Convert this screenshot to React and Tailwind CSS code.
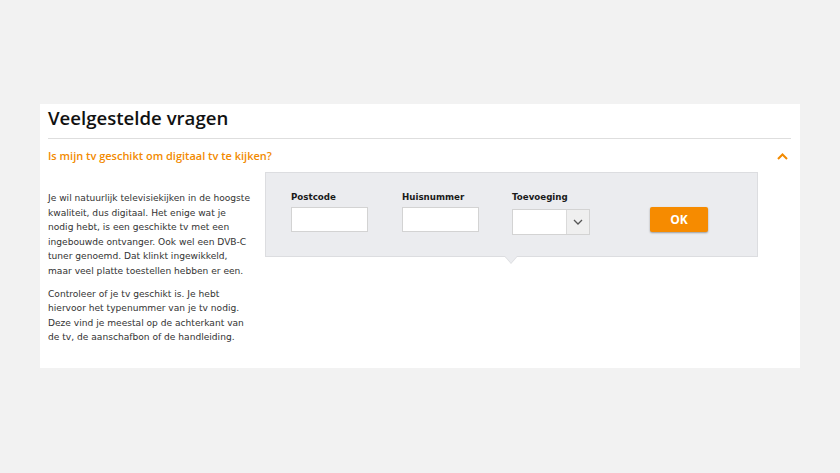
import React from 'react';

// FAQ block with postcode check form
// lines are broken by hand so the wrap matches the original
const paragraphs = [
    [
        'Je wil natuurlijk televisiekijken in de hoogste',
        'kwaliteit, dus digitaal. Het enige wat je',
        'nodig hebt, is een geschikte tv met een',
        'ingebouwde ontvanger. Ook wel een DVB-C',
        'tuner genoemd. Dat klinkt ingewikkeld,',
        'maar veel platte toestellen hebben er een.',
    ],
    [
        'Controleer of je tv geschikt is. Je hebt',
        'hiervoor het typenummer van je tv nodig.',
        'Deze vind je meestal op de achterkant van',
        'de tv, de aanschafbon of de handleiding.',
    ],
];

function Field({ label, children }) {
    return (
        <div className="flex flex-col">
            <label className="text-[8.7px] font-bold text-[#1a1a1a] leading-none mb-[5px]" style={{ fontFamily: '"DejaVu Sans", Verdana, sans-serif' }}>
                {label}
            </label>
            {children}
        </div>
    );
}

export default function App() {
    return (
        <div className="w-full min-h-[473px] bg-[#f2f2f2] pt-[104px]">
            <div className="ml-[40px] w-[760px] h-[264px] bg-white px-2" style={{ fontFamily: '"Open Sans", sans-serif' }}>
                <h2 className="text-[18.6px] font-semibold text-[#111] leading-none pt-[5px] h-[34px]">Veelgestelde vragen</h2>
                <div className="h-px bg-[#dedede] w-[743px]"></div>
                <div className="flex items-center justify-between w-[743px] h-[34px]">
                    <span className="text-[11px] font-semibold text-[#f28a00]">Is mijn tv geschikt om digitaal tv te kijken?</span>
                    <svg width="11" height="7" viewBox="0 0 11 7" className="mr-[3px]">
                        <path d="M1 6 L5.5 1.5 L10 6" fill="none" stroke="#f28a00" strokeWidth="2" />
                    </svg>
                </div>
                <div className="flex mt-[-1px]">
                    <div className="w-[212px] shrink-0 pt-[19px] text-[9.1px] leading-[14.6px] text-[#333] whitespace-nowrap" style={{ fontFamily: '"DejaVu Sans", Verdana, sans-serif' }}>
                        {paragraphs.map((lines, i) => (
                            <p key={i} className={i > 0 ? 'mt-[8px]' : ''}>
                                {lines.map((l, j) => (
                                    <span key={j} className="block">{l}</span>
                                ))}
                            </p>
                        ))}
                    </div>
                    <div className="ml-[5px] relative w-[493px] h-[85px] bg-[#ebecef] border border-[#dcdde0] pl-[25px] pt-[20px] flex items-start">
                        <Field label="Postcode">
                            <input className="w-[77px] h-[25px] bg-white border border-[#d3d3d3]" />
                        </Field>
                        <div className="ml-[34px]">
                            <Field label="Huisnummer">
                                <input className="w-[77px] h-[25px] bg-white border border-[#d3d3d3]" />
                            </Field>
                        </div>
                        <div className="ml-[33px]">
                            <Field label="Toevoeging">
                                <div className="w-[78px] h-[26px] flex border border-[#d3d3d3] bg-white mt-[2px]">
                                    <div className="flex-1"></div>
                                    <div className="w-[23px] bg-[#efefef] border-l border-[#dadada] flex items-center justify-center">
                                        <svg width="10" height="6" viewBox="0 0 10 6">
                                            <path d="M1 1 L5 5 L9 1" fill="none" stroke="#555" strokeWidth="1.3" />
                                        </svg>
                                    </div>
                                </div>
                            </Field>
                        </div>
                        <button className="ml-[60px] mt-[14px] w-[58px] h-[25px] bg-[#f68b00] text-white text-[12px] font-bold rounded-[2px] shadow-[0_1px_2px_rgba(0,0,0,0.35)]">
                            OK
                        </button>
                        {/* pointer below the box */}
                        <div className="absolute left-[238px] bottom-[-8px] w-0 h-0 border-l-[7px] border-r-[7px] border-t-[8px] border-l-transparent border-r-transparent border-t-[#dcdde0]"></div>
                        <div className="absolute left-[239px] bottom-[-7px] w-0 h-0 border-l-[6px] border-r-[6px] border-t-[7px] border-l-transparent border-r-transparent border-t-[#ebecef]"></div>
                    </div>
                </div>
            </div>
        </div>
    );
}
